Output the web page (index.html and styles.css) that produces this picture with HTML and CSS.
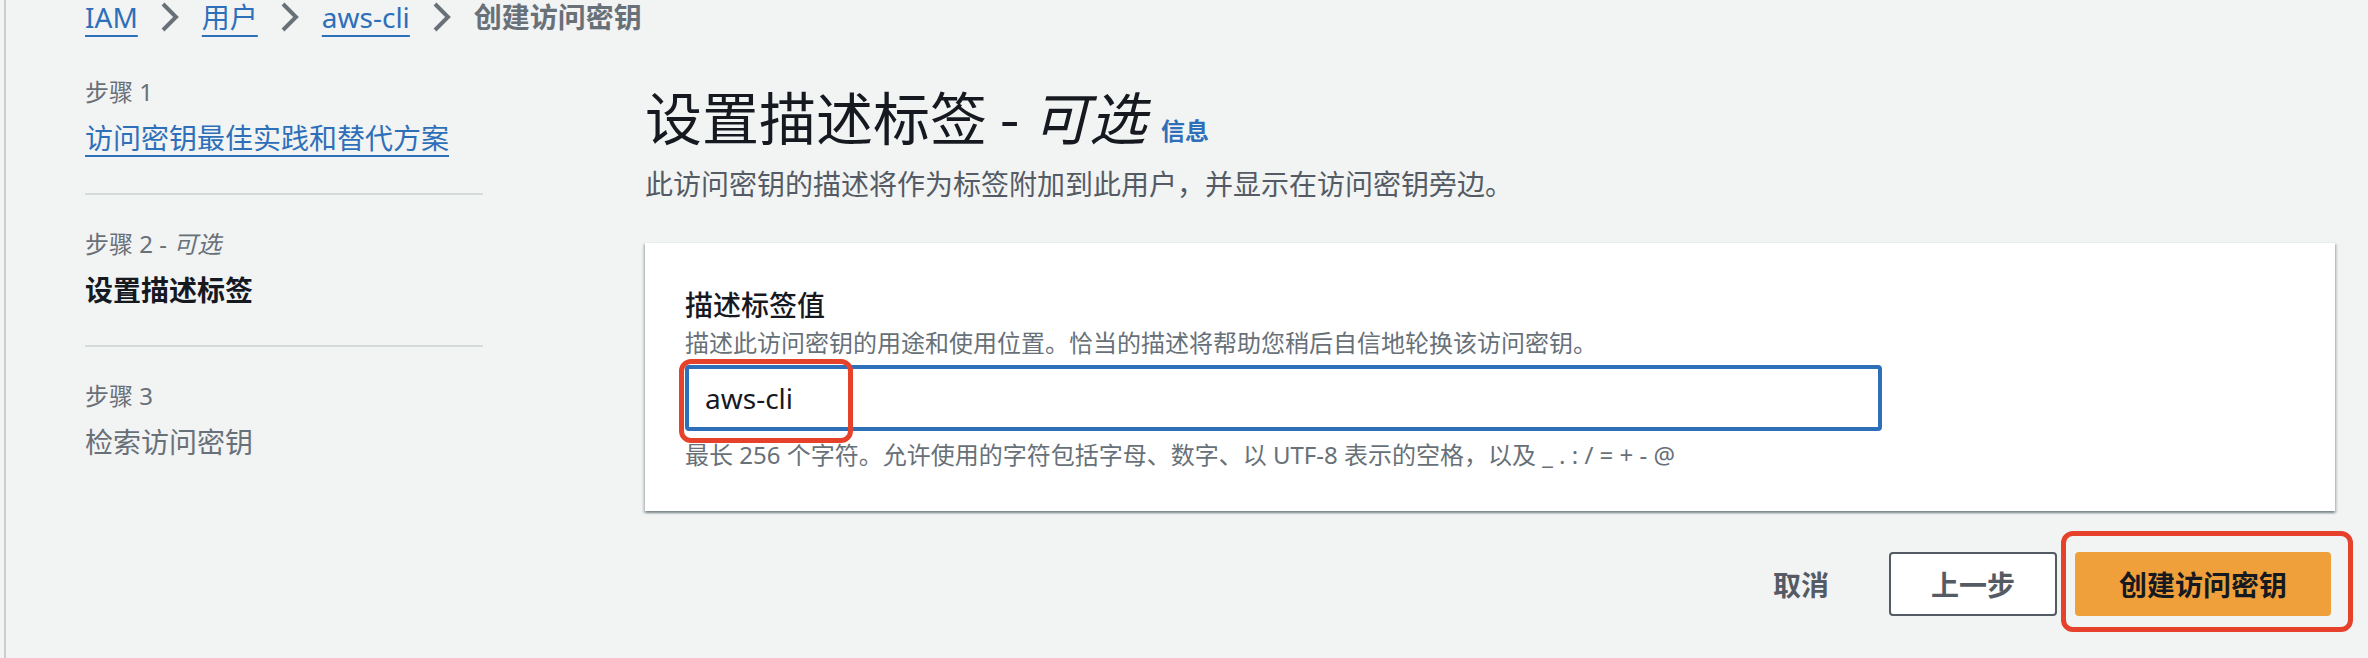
FILE: index.html
```html
<!DOCTYPE html>
<html lang="zh-CN">
<head>
    <meta charset="UTF-8">
    <meta name="viewport" content="width=device-width, initial-scale=1.0">
    <title>创建访问密钥</title>
    <link rel="stylesheet" href="styles.css">
</head>
<body>
    <div class="page">
        <nav class="breadcrumbs">
            <a href="#" class="crumb-link">IAM</a>
            <svg class="crumb-sep" width="18" height="30" viewBox="0 0 18 30"><polyline points="2,2 15,15 2,28" fill="none" stroke="#687078" stroke-width="4"/></svg>
            <a href="#" class="crumb-link">用户</a>
            <svg class="crumb-sep" width="18" height="30" viewBox="0 0 18 30"><polyline points="2,2 15,15 2,28" fill="none" stroke="#687078" stroke-width="4"/></svg>
            <a href="#" class="crumb-link">aws-cli</a>
            <svg class="crumb-sep" width="18" height="30" viewBox="0 0 18 30"><polyline points="2,2 15,15 2,28" fill="none" stroke="#687078" stroke-width="4"/></svg>
            <span class="crumb-current">创建访问密钥</span>
        </nav>

        <div class="layout">
            <ul class="steps">
                <li class="step">
                    <span class="step-num">步骤 1</span>
                    <a href="#" class="step-title step-link">访问密钥最佳实践和替代方案</a>
                </li>
                <li class="step">
                    <span class="step-num">步骤 2 - <i>可选</i></span>
                    <span class="step-title step-active">设置描述标签</span>
                </li>
                <li class="step step-last">
                    <span class="step-num">步骤 3</span>
                    <span class="step-title step-disabled">检索访问密钥</span>
                </li>
            </ul>

            <main class="content">
                <h1 class="h-primary">设置描述标签 - <i>可选</i> <a href="#" class="info-link">信息</a></h1>
                <p class="desc">此访问密钥的描述将作为标签附加到此用户，并显示在访问密钥旁边。</p>

                <div class="card">
                    <label class="field-label" for="tagValue">描述标签值</label>
                    <p class="field-help">描述此访问密钥的用途和使用位置。恰当的描述将帮助您稍后自信地轮换该访问密钥。</p>
                    <div class="input-wrap">
                        <input type="text" id="tagValue" class="text-input" value="aws-cli">
                        <span class="mark mark-input"></span>
                    </div>
                    <p class="field-constraint">最长 256 个字符。允许使用的字符包括字母、数字、以 UTF-8 表示的空格，以及 _ . : / = + - @</p>
                </div>

                <div class="actions">
                    <button class="btn-link">取消</button>
                    <button class="btn-normal">上一步</button>
                    <span class="btn-wrap">
                        <button class="btn-primary">创建访问密钥</button>
                        <span class="mark mark-btn"></span>
                    </span>
                </div>
            </main>
        </div>
    </div>
</body>
</html>
```

FILE: styles.css
```css
body {
    margin: 0;
    padding-left: 4px;
    background-color: #f2f3f3;
    font-family: "Noto Sans", "Noto Sans CJK SC", sans-serif;
    color: #16191f;
}

.page {
    border-left: 2px solid #c9cfd1;
    min-height: 658px;
    padding: 0 33px 0 79px;
}

/* breadcrumbs */
.breadcrumbs {
    display: flex;
    align-items: center;
    height: 34px;
    font-size: 28px;
    line-height: 34px;
}

.crumb-link {
    color: #2e6fba;
    text-decoration: underline;
    text-decoration-thickness: 2px;
    text-underline-offset: 7px;
}

.crumb-sep {
    margin: 0 23px 0 23px;
}

.crumb-current {
    color: #687078;
    font-weight: 700;
}

/* layout */
.layout {
    display: flex;
}

.steps {
    width: 398px;
    flex-shrink: 0;
    list-style: none;
    margin: 42px 162px 0 0;
    padding: 0;
}

.step {
    display: flex;
    flex-direction: column;
    padding: 33px 0;
    border-bottom: 2px solid #d5dbdb;
}

.step:first-child {
    padding-top: 0;
}

.step-last {
    border-bottom: none;
}

.step-num {
    font-size: 24px;
    line-height: 32px;
    color: #687078;
}

.step-title {
    margin-top: 8px;
    font-size: 28px;
    line-height: 44px;
}

.step-link {
    align-self: flex-start;
    color: #2e6fba;
    text-decoration: underline;
    text-decoration-thickness: 2px;
    text-underline-offset: 6px;
}

.step-active {
    font-weight: 700;
    color: #16191f;
}

.step-disabled {
    color: #687078;
}

/* main */
.content {
    flex: 1;
    padding-top: 45px;
}

.h-primary {
    margin: 0;
    height: 72px;
    font-family: "Noto Sans CJK SC", sans-serif;
    font-size: 57px;
    line-height: 72px;
    font-weight: 400;
    color: #16191f;
}

.info-link {
    margin-left: 2px;
    font-size: 24px;
    line-height: 1;
    font-weight: 700;
    color: #2e6fba;
    text-decoration: none;
}

.desc {
    margin: 13px 0 0;
    font-size: 28px;
    line-height: 40px;
    color: #545b64;
}

.card {
    margin-top: 38px;
    padding: 40px;
    background-color: #ffffff;
    border-top: 1px solid #eaeded;
    box-shadow: 0 2px 2px 0 rgba(0, 28, 36, 0.3), 2px 2px 2px 0 rgba(0, 28, 36, 0.15), -2px 2px 2px 0 rgba(0, 28, 36, 0.15);
}

.field-label {
    display: block;
    font-size: 28px;
    line-height: 44px;
    font-weight: 500;
    color: #16191f;
}

.field-help,
.field-constraint {
    margin: 0;
    font-size: 24px;
    line-height: 32px;
    color: #687078;
}

.field-constraint {
    margin-top: 8px;
}

.input-wrap {
    position: relative;
    width: 1197px;
    margin-top: 6px;
}

.text-input {
    display: block;
    width: 100%;
    height: 66px;
    box-sizing: border-box;
    padding: 0 16px;
    border: 4px solid #2e6fba;
    border-radius: 4px;
    outline: none;
    font-family: "Noto Sans", "Noto Sans CJK SC", sans-serif;
    font-size: 28px;
    color: #16191f;
    background-color: #ffffff;
}

/* red annotation boxes */
.mark {
    position: absolute;
    border: 5px solid #e5412b;
    border-radius: 12px;
    box-sizing: border-box;
    pointer-events: none;
}

.mark-input {
    left: -6px;
    top: -6px;
    width: 174px;
    height: 84px;
}

.mark-btn {
    left: -14px;
    top: -21px;
    width: 292px;
    height: 101px;
}

/* actions */
.actions {
    display: flex;
    justify-content: flex-end;
    align-items: center;
    gap: 18px;
    margin-top: 41px;
    padding-right: 4px;
}

.actions button {
    height: 64px;
    font-family: "Noto Sans", "Noto Sans CJK SC", sans-serif;
    font-size: 28px;
    font-weight: 700;
    border-radius: 4px;
    cursor: pointer;
}

.btn-link {
    padding: 0 42px;
    border: none;
    background: none;
    color: #545b64;
}

.btn-normal {
    padding: 0 40px;
    border: 2px solid #545b64;
    background-color: #ffffff;
    color: #545b64;
}

.btn-wrap {
    position: relative;
    display: flex;
}

.btn-primary {
    padding: 0 42px;
    border: 2px solid #f0a03a;
    background-color: #f0a03a;
    color: #16191f;
}
```
